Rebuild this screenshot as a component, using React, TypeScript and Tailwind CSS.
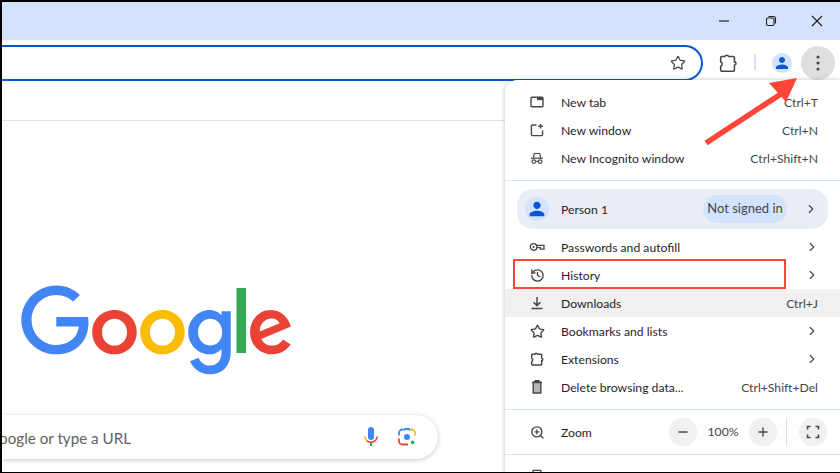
import React from "react";
import { ChevronRight, Star, History, ZoomIn, Minus, Plus, Printer } from "lucide-react";

const PERSON = "M12 12c2.21 0 4-1.79 4-4s-1.79-4-4-4-4 1.79-4 4 1.79 4 4 4zm0 2c-2.67 0-8 1.34-8 4v2h16v-2c0-2.66-5.33-4-8-4z";
const PUZZLE = "M5 5h3.6a2.2 2.2 0 0 1 4.2 0H18a1 1 0 0 1 1 1v4.8a1.7 1.7 0 0 1 0 3.4V20a1 1 0 0 1-1 1H5a1 1 0 0 1-1-1v-4.2a2.9 2.9 0 0 0 0-5.2V6a1 1 0 0 1 1-1z";

function NewTabIcon() {
  return (
    <svg width="16" height="16" viewBox="0 0 16 16" fill="none">
      <rect x="2" y="3.2" width="12" height="9.6" rx="1" stroke="#474747" strokeWidth="1.4" />
      <rect x="8" y="3" width="6" height="3.2" fill="#474747" />
    </svg>
  );
}
function NewWindowIcon() {
  return (
    <svg width="16" height="16" viewBox="0 0 16 16" fill="none" stroke="#474747" strokeWidth="1.4">
      <path d="M7.5 3H3.4a1 1 0 0 0-1 1V12.6a1 1 0 0 0 1 1h9.2a1 1 0 0 0 1-1V8.5" />
      <path d="M11.5 2v4.6M9.2 4.3h4.6" />
    </svg>
  );
}
function IncognitoIcon() {
  return (
    <svg width="16" height="16" viewBox="0 0 16 16" fill="none" stroke="#474747" strokeWidth="1.2">
      <path d="M2 8.2h12" />
      <path d="M4.4 7.8l.9-4.3h5.4l.9 4.3" />
      <circle cx="4.8" cy="11.6" r="1.8" />
      <circle cx="11.2" cy="11.6" r="1.8" />
      <path d="M6.6 11.4h2.8" />
    </svg>
  );
}
function KeyIcon() {
  return (
    <svg width="16" height="16" viewBox="0 0 16 16" fill="none" stroke="#474747" strokeWidth="1.3">
      <circle cx="4.6" cy="8" r="3.3" />
      <circle cx="4.6" cy="8" r="1.1" fill="#474747" stroke="none" />
      <path d="M8 6.4h7v3.8h-3.6v-1.6H8" />
    </svg>
  );
}
function PuzzleIcon({ size, sw }: { size: number; sw: number }) {
  return (
    <svg width={size} height={size} viewBox="0 0 24 24" fill="none" stroke="#474747" strokeWidth={sw} strokeLinejoin="round">
      <path d={PUZZLE} />
    </svg>
  );
}
function TrashIcon() {
  return (
    <svg width="16" height="16" viewBox="0 0 16 16" fill="none" stroke="#474747" strokeWidth="1.4">
      <path d="M3 3.2h10M6 3V1.8h4V3" />
      <path d="M4.2 3.6h7.6V14H4.2z" fill="#b5b5b5" />
    </svg>
  );
}
function DownloadIcon() {
  return (
    <svg width="16" height="16" viewBox="0 0 16 16" fill="none" stroke="#474747" strokeWidth="1.5">
      <path d="M8 2v8.4M4.6 7.2L8 10.6l3.4-3.4M2.5 13.6h11" />
    </svg>
  );
}
function FullscreenIcon() {
  return (
    <svg width="16" height="16" viewBox="0 0 16 16" fill="none" stroke="#474747" strokeWidth="1.6">
      <path d="M2.5 5.5V2.5h3M10.5 2.5h3v3M13.5 10.5v3h-3M5.5 13.5h-3v-3" />
    </svg>
  );
}
function PersonAvatar({ d, s }: { d: string; s: number }) {
  return (
    <span className={`flex items-center justify-center rounded-full bg-[#d3e3fd] ${d}`}>
      <svg width={s} height={s} viewBox="0 0 24 24" fill="#0b57d0">
        <path d={PERSON} />
      </svg>
    </span>
  );
}
function GoogleLogo() {
  return (
    <svg width="272" height="92" viewBox="0 0 272 92">
      <path fill="#EA4335" d="M115.75 47.18c0 12.77-9.99 22.18-22.25 22.18s-22.25-9.41-22.25-22.18C71.25 34.32 81.24 25 93.5 25s22.25 9.32 22.25 22.18zm-9.74 0c0-7.98-5.79-13.44-12.51-13.44S80.99 39.2 80.99 47.18c0 7.9 5.79 13.44 12.51 13.44s12.51-5.55 12.51-13.44z" />
      <path fill="#FBBC05" d="M163.75 47.18c0 12.77-9.99 22.18-22.25 22.18s-22.25-9.41-22.25-22.18c0-12.85 9.99-22.18 22.25-22.18s22.25 9.32 22.25 22.18zm-9.74 0c0-7.98-5.79-13.44-12.51-13.44s-12.51 5.46-12.51 13.44c0 7.9 5.79 13.44 12.51 13.44s12.51-5.55 12.51-13.44z" />
      <path fill="#4285F4" d="M209.75 26.34v39.82c0 16.38-9.66 23.07-21.08 23.07-10.75 0-17.22-7.19-19.66-13.07l8.48-3.53c1.51 3.61 5.21 7.87 11.17 7.87 7.31 0 11.84-4.51 11.84-13v-3.19h-.34c-2.18 2.69-6.38 5.04-11.68 5.04-11.09 0-21.25-9.66-21.25-22.09 0-12.52 10.16-22.26 21.25-22.26 5.29 0 9.49 2.35 11.68 4.96h.34v-3.61h9.25zm-8.56 20.92c0-7.81-5.21-13.52-11.84-13.52-6.72 0-12.35 5.71-12.35 13.52 0 7.73 5.63 13.36 12.35 13.36 6.63 0 11.84-5.63 11.84-13.36z" />
      <path fill="#34A853" d="M225 3v65h-9.5V3h9.5z" />
      <path fill="#EA4335" d="M262.02 54.48l7.56 5.04c-2.44 3.61-8.32 9.83-18.48 9.83-12.6 0-22.01-9.74-22.01-22.18 0-13.19 9.49-22.18 20.92-22.18 11.51 0 17.14 9.16 18.98 14.11l1.01 2.52-29.65 12.28c2.27 4.45 5.8 6.72 10.75 6.72 4.96 0 8.4-2.44 10.92-6.14zm-23.27-7.98l19.82-8.23c-1.09-2.77-4.37-4.7-8.23-4.7-4.95 0-11.84 4.37-11.59 12.93z" />
      <path fill="#4285F4" d="M35.29 41.41V32H67c.31 1.64.47 3.58.47 5.68 0 7.06-1.93 15.79-8.15 22.01-6.05 6.3-13.78 9.66-24.02 9.66C16.32 69.35.36 53.89.36 34.91.36 15.93 16.32.47 35.3.47c10.5 0 17.98 4.12 23.6 9.49l-6.64 6.64c-4.03-3.78-9.49-6.72-16.97-6.72-13.86 0-24.7 11.17-24.7 25.03 0 13.86 10.84 25.03 24.7 25.03 8.99 0 14.11-3.61 17.39-6.89 2.66-2.66 4.41-6.46 5.1-11.65l-22.49.01z" />
    </svg>
  );
}
function MicIcon() {
  return (
    <svg width="16" height="24" viewBox="0 0 16 24" fill="none">
      <rect x="5" y="2" width="6" height="13" rx="3" fill="#4285f4" />
      <path d="M1.8 11.5a6.2 6.2 0 0 0 2.2 4.3" stroke="#fbbc05" strokeWidth="1.7" />
      <path d="M4 15.8a6.4 6.4 0 0 0 8 0 6.2 6.2 0 0 0 2.2-4.3" stroke="#ea4335" strokeWidth="1.7" />
      <path d="M8 18v3" stroke="#34a853" strokeWidth="2" />
    </svg>
  );
}
function LensIcon() {
  return (
    <svg width="20" height="20" viewBox="0 0 20 20" fill="none" strokeWidth="1.8">
      <path d="M2 8.5V6a3.5 3.5 0 0 1 3.5-3.5H6.5" stroke="#4285f4" />
      <path d="M7 3.5l1-1.5h4l1 1.5" stroke="#4285f4" />
      <path d="M13.5 2.5h1A3.5 3.5 0 0 1 18 6v2.5" stroke="#fbbc05" />
      <path d="M2 11.5V14a3.5 3.5 0 0 0 3.5 3.5H11" stroke="#ea4335" />
      <circle cx="10" cy="10" r="3" fill="#4285f4" stroke="none" />
      <circle cx="15.6" cy="15.4" r="1.8" fill="#34a853" stroke="none" />
    </svg>
  );
}

function Row({ icon, label, right, chevron, active }: { icon: React.ReactNode; label: string; right?: string; chevron?: boolean; active?: boolean }) {
  return (
    <div className={`flex h-7 items-center pl-6 pr-[22px] ${active ? "bg-[#f0f0f0]" : ""}`}>
      <span className="flex w-4 h-4 items-center justify-center text-[#474747]">{icon}</span>
      <span className="ml-4 flex-1 whitespace-nowrap pt-0.5">{label}</span>
      {right && <span className="whitespace-nowrap pt-0.5 text-[#444746]">{right}</span>}
      {chevron && <ChevronRight size={14} strokeWidth={2} className="text-[#474747] mr-[-1px]" />}
    </div>
  );
}
function Sep() {
  return <div className="h-px bg-[#d3e3fd] my-2" />;
}
function CircleBtn({ children }: { children: React.ReactNode }) {
  return <span className="flex h-7 w-7 items-center justify-center rounded-full bg-[#f0f0f0] text-[#474747]">{children}</span>;
}

function Menu() {
  return (
    <div className="absolute right-0 top-[78px] w-[335px] h-[420px] rounded-tl-xl rounded-bl-xl bg-white pt-2 text-[12.2px] text-[#1f1f1f] shadow-[0_0_4px_rgba(0,0,0,0.25)]">
      <Row icon={<NewTabIcon />} label="New tab" right="Ctrl+T" />
      <Row icon={<NewWindowIcon />} label="New window" right="Ctrl+N" />
      <Row icon={<IncognitoIcon />} label="New Incognito window" right="Ctrl+Shift+N" />
      <Sep />
      <div className="mx-3 flex h-10 items-center rounded-2xl bg-[#e9eef6] pl-2 pr-[10px]">
        <PersonAvatar d="h-6 w-6" s={22} />
        <span className="ml-3 flex-1 pt-0.5">Person 1</span>
        <span className="flex h-7 w-[84px] items-center justify-center rounded-full bg-[#d3e3fd] text-[13px] text-[#444746]">Not signed in</span>
        <ChevronRight size={14} strokeWidth={2} className="ml-[17px] text-[#474747]" />
      </div>
      <div className="mt-1">
        <Row icon={<KeyIcon />} label="Passwords and autofill" chevron />
        <Row icon={<History size={15} strokeWidth={2.2} />} label="History" chevron />
        <Row icon={<DownloadIcon />} label="Downloads" right="Ctrl+J" active />
        <Row icon={<Star size={15} strokeWidth={2.2} />} label="Bookmarks and lists" chevron />
        <Row icon={<PuzzleIcon size={16} sw={2.2} />} label="Extensions" chevron />
        <Row icon={<TrashIcon />} label="Delete browsing data..." right="Ctrl+Shift+Del" />
      </div>
      <Sep />
      <div className="flex h-7 items-center pl-6">
        <span className="flex h-4 w-4 items-center justify-center text-[#474747]"><ZoomIn size={15} strokeWidth={2.2} /></span>
        <span className="ml-4 flex-1 pt-0.5">Zoom</span>
        <CircleBtn><Minus size={14} strokeWidth={2.4} /></CircleBtn>
        <span className="w-[52px] text-center text-[#444746]">100%</span>
        <CircleBtn><Plus size={14} strokeWidth={2.4} /></CircleBtn>
        <span className="ml-[9px] h-7 w-px bg-[#d3e3fd]" />
        <span className="ml-[12px] mr-[13px]"><CircleBtn><FullscreenIcon /></CircleBtn></span>
      </div>
      <Sep />
      <Row icon={<Printer size={16} strokeWidth={2} />} label="" />
    </div>
  );
}

export default function App() {
  return (
    <div className="relative flex h-[473px] w-[840px] flex-col overflow-hidden border-t-2 border-b border-l-2 border-black bg-white font-['Lato',sans-serif]">
      <div className="flex h-[38px] shrink-0 items-center justify-end bg-[#d3e3fd] pr-[17px] text-[#1f1f1f]">
        <svg width="12" height="12" viewBox="0 0 12 12" stroke="#1f1f1f" strokeWidth="1.2" className="mr-[35px]"><path d="M1 6h10" /></svg>
        <svg width="12" height="12" viewBox="0 0 12 12" fill="none" stroke="#1f1f1f" strokeWidth="1.1" className="mr-[34px]">
          <rect x="1.5" y="3" width="7.5" height="7.5" rx="1.6" />
          <path d="M3.5 1.5h5a2 2 0 0 1 2 2v5" />
        </svg>
        <svg width="12" height="12" viewBox="0 0 12 12" stroke="#1f1f1f" strokeWidth="1.2"><path d="M1 1l10 10M11 1L1 11" /></svg>
      </div>
      <div className="flex h-[41px] shrink-0 items-start pt-[5px]">
        <div className="flex h-9 w-[701px] items-center justify-end rounded-r-[18px] border-y-2 border-r-2 border-[#0b57d0] pr-[15px]">
          <Star size={16} strokeWidth={1.8} className="text-[#474747]" />
        </div>
        <div className="ml-[14px] mt-[7px]"><PuzzleIcon size={22} sw={1.7} /></div>
        <span className="ml-[15px] mt-[9px] h-[16px] w-0.5 bg-[#d3e3fd]" />
        <span className="ml-[16px] mt-[8px]"><PersonAvatar d="h-5 w-5" s={18} /></span>
        <span className="ml-[9px] mt-px flex h-[34px] w-[34px] items-center justify-center rounded-full bg-[#dfdfdf]">
          <svg width="4" height="16" viewBox="0 0 4 16" fill="#474747"><circle cx="2" cy="2" r="1.6" /><circle cx="2" cy="8" r="1.6" /><circle cx="2" cy="14" r="1.6" /></svg>
        </span>
      </div>
      <div className="h-10 shrink-0 border-b border-[#e0e0e0]" />
      <div className="flex flex-1 flex-col">
        <div className="ml-[19px] mt-[164px] h-[91px] w-[272px]"><GoogleLogo /></div>
        <div className="mt-[39px] flex h-11 w-[436px] items-center rounded-r-[22px] bg-white pr-[21px] shadow-[0_1px_5px_rgba(32,33,36,0.26)]">
          <div className="flex flex-1 justify-end overflow-hidden pr-[232px] whitespace-nowrap pt-0.5 text-[15.2px] text-[#5f6368]">Search Google or type a URL</div>
          <MicIcon />
          <span className="ml-[18px]"><LensIcon /></span>
        </div>
      </div>
      <Menu />
      <div className="absolute left-[511px] top-[257px] h-[30px] w-[273px] border-2 border-[#ff4538]" />
      <svg className="absolute left-[698px] top-[70px]" width="106" height="76" viewBox="0 0 106 76">
        <path d="M6 71L84 20" stroke="#ff4538" strokeWidth="5.5" />
        <path d="M97 6L69 11 86 30z" fill="#ff4538" />
      </svg>
    </div>
  );
}
